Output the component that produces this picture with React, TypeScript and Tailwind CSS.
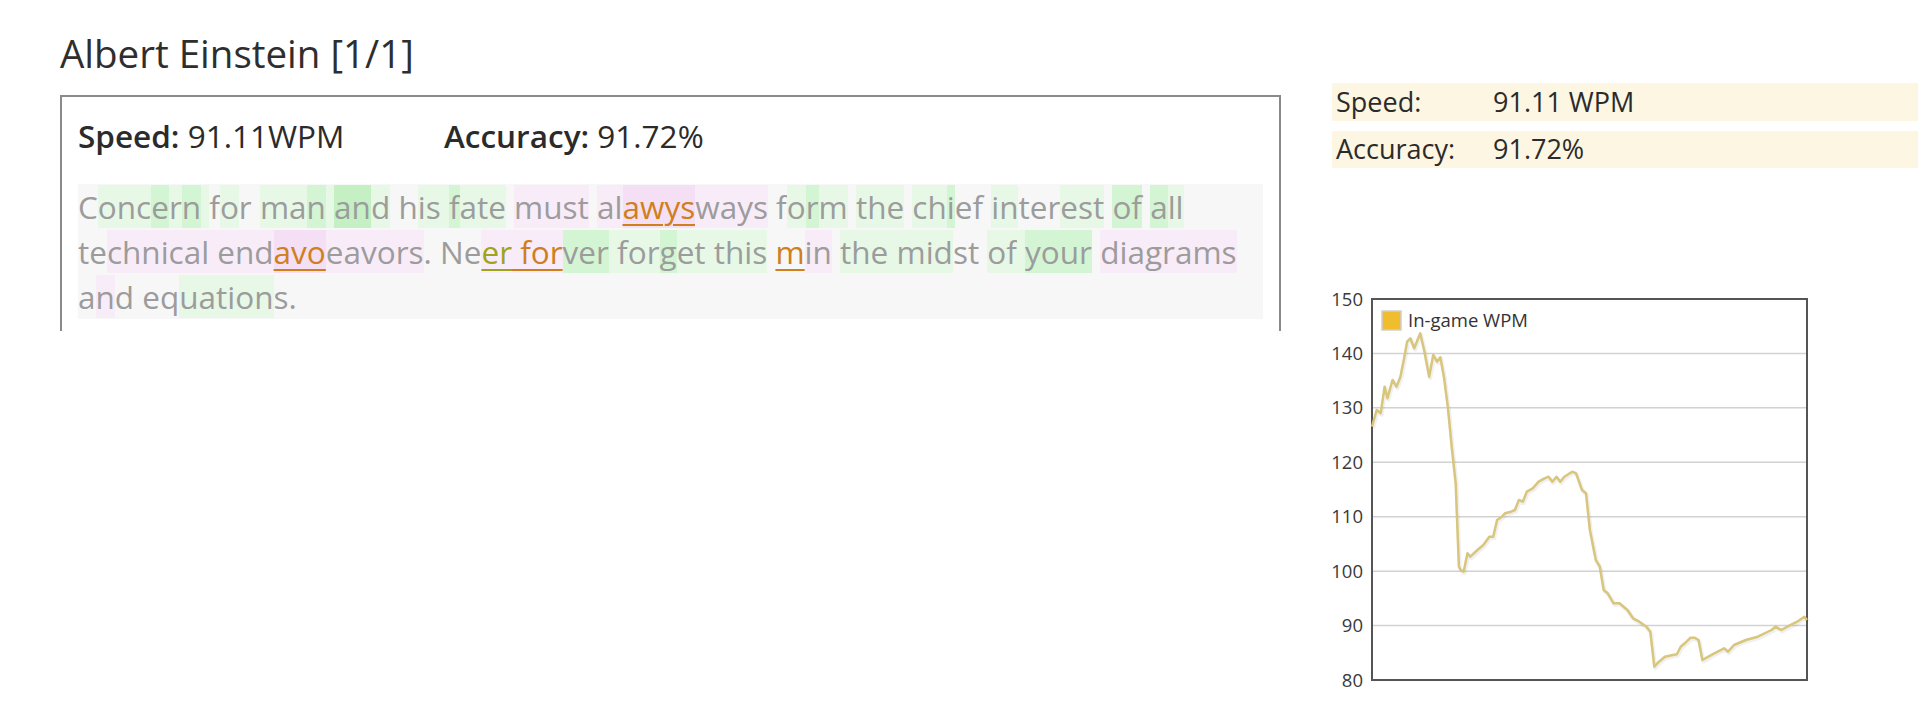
import React from "react"

type Seg = [string, string, string?]

const BG: Record<string, string> = {
  "": "",
  g: "bg-[#e7f8e7]",
  G: "bg-[#d4f5d4]",
  H: "bg-[#c4f0c4]",
  p: "bg-[#f9ecf9]",
  P: "bg-[#f4dff4]",
}

const ERR: Record<string, string> = {
  o: "text-[#cf7f1c] underline decoration-2 underline-offset-[5px]",
  y: "text-[#9ea41c] underline decoration-2 underline-offset-[5px]",
}

const lines: Seg[][] = [
  [
    ["C", ""], ["onc", "g"], ["e", "G"], ["r", "g"], ["n", "G"], [" ", "g"],
    ["f", ""], ["o", "g"], ["r ", ""], ["ma", "g"], ["n", "G"], [" ", "g"],
    ["an", "H"], ["d", "g"], [" h", ""], ["is ", "g"], ["f", "G"], ["ate", "g"], [" ", ""],
    ["must", "p"], [" ", ""], ["al", "p"], ["awys", "P", "o"], ["ways", "p"], [" f", ""],
    ["o", "g"], ["r", "G"], ["m", "g"], [" ", ""], ["the", "g"], [" ", ""], ["ch", "g"],
    ["i", "G"], ["ef", ""], [" ", ""], ["in", "g"], ["ter", ""], ["est", "g"], [" ", ""],
    ["of", "G"], [" ", ""], ["a", "G"], ["ll", "g"],
  ],
  [
    ["te", ""], ["chnical end", "p"], ["avo", "P", "o"], ["eavors", "p"], [". Ne", ""],
    ["er", "p", "y"], [" for", "p", "o"], ["ver", "G"], [" ", "g"], ["for", "g"], ["g", "G"],
    ["et", "g"], [" this", "g"], [" ", ""], ["m", "", "o"], ["in", "p"], [" ", ""],
    ["the", "g"], [" ", "g"], ["mid", "g"], ["st", ""], [" ", ""], ["of", "g"], [" ", "g"],
    ["your", "G"], [" ", ""], ["diagrams", "p"],
  ],
  [
    ["a", ""], ["n", "p"], ["d", ""], [" eq", ""], ["uation", "g"], ["s.", ""],
  ],
]

const pts: [number, number][] = [
  [40, 141.7], [44.7, 125], [48.7, 128.3], [52.6, 101.7], [55.4, 113.3], [60.5, 95],
  [64.5, 101.7], [68.4, 91.7], [72.4, 71.7], [75.1, 56.7], [78.3, 53.3], [82.2, 63.3],
  [88.2, 48.3], [92.1, 65], [97.2, 91.7], [101.2, 70], [105.1, 76.7], [108.3, 72.3],
  [111.9, 91.7], [115.8, 121.7], [119.7, 161.7], [123.7, 198.3], [126.9, 281.7],
  [128.8, 285], [131.6, 286.7], [135.5, 268.3], [138.3, 271.7], [145.4, 265], [151.3, 260],
  [157.3, 251.7], [161.2, 251.7], [165.1, 235], [169.9, 231.7], [173, 228.3], [179, 226.7],
  [182.9, 225], [186.9, 215], [190.8, 216.7], [194.8, 206.7], [200.7, 203.3], [206.6, 196.7],
  [212.5, 193.3], [216.5, 191.7], [220.4, 196.7], [224.4, 191.7], [228.3, 196.7],
  [232.3, 191.7], [240.2, 186.7], [244.1, 188.3], [250, 205], [254, 208.3], [257.9, 245],
  [263.8, 275], [267.8, 281.7], [271.7, 305], [275.7, 308.3], [281.6, 318.3], [287.5, 318.3],
  [295.4, 325], [301.1, 333.3], [307.3, 336.7], [314.4, 341.7], [318.3, 346.7],
  [322.3, 381.7], [327, 376.7], [332.9, 371.7], [340.8, 370], [344.8, 369.3], [348.7, 361.7],
  [352.7, 358.3], [358.6, 352.7], [362.5, 352.7], [366.5, 355], [370.4, 375], [376.4, 371.7],
  [382.3, 368.3], [392.1, 363.3], [396.1, 366.7], [402, 360], [413.9, 355], [425.7, 351.7],
  [439.5, 345], [443.5, 341.7], [449.4, 345], [455.3, 341.7], [465.2, 336.7], [472.3, 331.7],
  [475, 335],
]

function WpmChart() {
  const top = 14
  const step = 54.43
  const labels = [150, 140, 130, 120, 110, 100, 90, 80]
  const d = pts.map(([x, y], i) => `${i ? "L" : "M"}${x} ${y}`).join(" ")
  return (
    <svg width="490" height="410" className="mt-[117px] block" style={{ fontFamily: '"Open Sans", sans-serif' }}>
      {labels.map((v, i) => (
        <g key={v}>
          {i > 0 && i < 7 && (
            <line x1="40" x2="475" y1={top + i * step} y2={top + i * step} stroke="#d2d2d2" strokeWidth="1.5" />
          )}
          <text x="31" y={top + i * step + 6.5} textAnchor="end" fontSize="18.5" fill="#3a3a3a">
            {v}
          </text>
        </g>
      ))}
      <rect x="40" y={top} width="435" height={7 * step} fill="none" stroke="#555" strokeWidth="2" />
      <path d={d} fill="none" stroke="rgba(0,0,0,0.06)" strokeWidth="4" transform="translate(1 1.5)" strokeLinejoin="round" />
      <path d={d} fill="none" stroke="#d8c67c" strokeWidth="2.5" strokeLinejoin="round" />
      <rect x="50" y="26" width="19" height="19" fill="#efbd2e" stroke="#cfcfcf" strokeWidth="1.5" />
      <text x="76" y="42" fontSize="18.5" fill="#333">
        In-game WPM
      </text>
    </svg>
  )
}

export default function App() {
  return (
    <div className="flex w-[1918px] h-[717px] overflow-hidden bg-white text-[#2b2b2b] font-['Open_Sans',sans-serif]">
      {/* left: quote result */}
      <div className="ml-[60px] w-[1221px] pt-[31px]">
        <h1 className="text-[38.5px] leading-[44px] font-normal text-[#2e2e2e]">Albert Einstein [1/1]</h1>
        <div className="mt-[20px] h-[236px] border-2 border-b-0 border-[#8a8a8a] px-4 pt-[19px]">
          <div className="flex text-[31.5px] leading-[40px] text-[#2b2b2b]">
            <div className="w-[366px]">
              <span className="font-semibold">Speed:</span> 91.11WPM
            </div>
            <div>
              <span className="font-semibold">Accuracy:</span> 91.72%
            </div>
          </div>
          <div className="mt-[28px] bg-[#f7f7f7] text-[31.5px] leading-[45px] text-[#9c9c9c] whitespace-pre">
            {lines.map((segs, li) => (
              <div key={li}>
                {segs.map(([t, bg, err], si) => (
                  <span key={si} className={`${BG[bg]} ${err ? ERR[err] : ""}`}>
                    {t}
                  </span>
                ))}
              </div>
            ))}
          </div>
        </div>
      </div>

      {/* right: stats + chart */}
      <div className="ml-[51px] flex-1 pt-[83px]">
        <div className="flex h-[38px] items-center bg-[#fcf6e2] pl-1 text-[27px]">
          <span className="w-[157px]">Speed:</span>
          <span>91.11 WPM</span>
        </div>
        <div className="mt-[10px] flex h-[37px] items-center bg-[#fcf6e2] pl-1 text-[27px]">
          <span className="w-[157px]">Accuracy:</span>
          <span>91.72%</span>
        </div>
        <WpmChart />
      </div>
    </div>
  )
}
